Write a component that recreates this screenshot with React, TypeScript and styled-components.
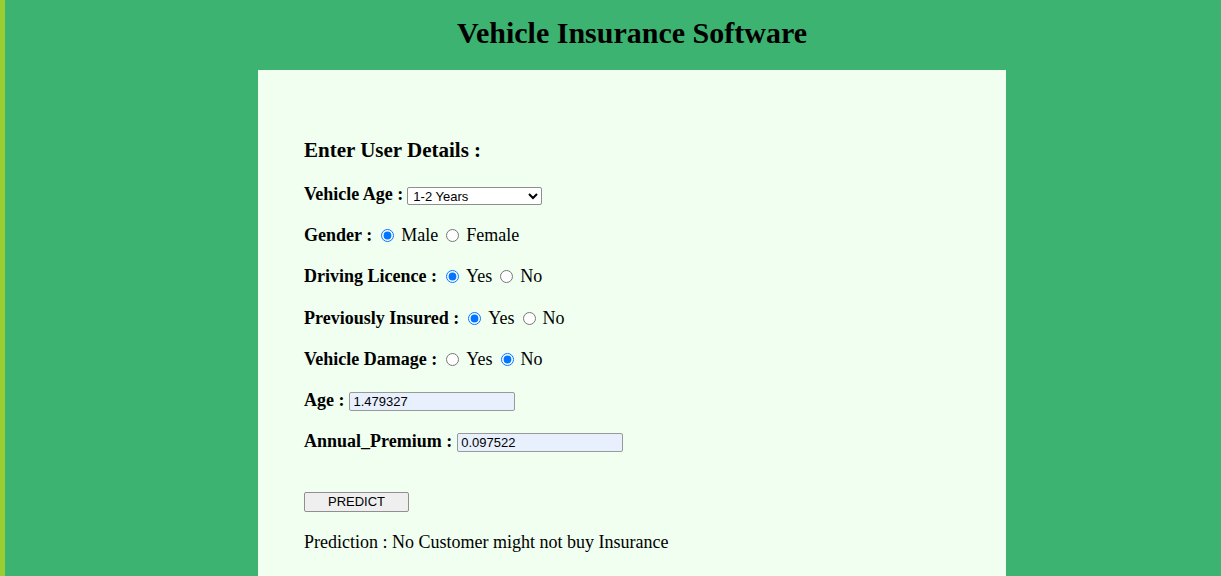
import React, { useState } from "react"
import styled, { createGlobalStyle } from "styled-components"

const GlobalStyle = createGlobalStyle`
  html, body {
    margin: 0;
    padding: 0;
    height: 100%;
  }
  body {
    background-color: #3cb371;
    border-left: 5px solid #9acd32;
    font-family: "Liberation Serif", "Times New Roman", serif;
    color: #000;
    overflow: hidden;
  }
`

const Page = styled.div`
  width: 748px;
  margin-left: 253px;
`

const Title = styled.h1`
  margin: 0;
  height: 70px;
  display: flex;
  align-items: center;
  justify-content: center;
  font-size: 30px;
  font-weight: bold;
  padding-bottom: 4px;
  box-sizing: border-box;
`

const Panel = styled.form`
  background-color: #f0fff0;
  min-height: 520px;
  padding: 66px 46px 20px;
  box-sizing: border-box;
`

const Heading = styled.h3`
  margin: 0 0 10px;
  font-size: 21px;
  font-weight: bold;
  line-height: 28px;
`

const Row = styled.div<{ $gap?: number }>`
  display: flex;
  align-items: center;
  height: 41.2px;
  font-size: 18px;
  margin-top: ${p => p.$gap ?? 0}px;
`

const Label = styled.label`
  font-weight: bold;
  margin-right: 4px;
`

const Select = styled.select`
  width: 135px;
  height: 18px;
  margin-top: 2px;
  font-family: Arial, "Liberation Sans", sans-serif;
  font-size: 13px;
  padding: 0 0 0 1px;
  border: 1px solid #8f8f8f;
  border-radius: 2px;
  background: #fff;
  color: #000;
`

const Radio = styled.input.attrs({ type: "radio" })`
  margin: 0 7px 0 5px;
  width: 13px;
  height: 13px;
`

const Option = styled.span`
  margin-right: 3px;
`

const TextInput = styled.input`
  width: 166px;
  height: 19px;
  margin-top: 2px;
  margin-left: 1px;
  box-sizing: border-box;
  font-family: Arial, "Liberation Sans", sans-serif;
  font-size: 13px;
  padding: 1px 3px;
  border: 1px solid #999;
  border-radius: 2px;
  background-color: #e8f0fe;
  color: #000;
`

const Button = styled.button`
  width: 105px;
  height: 20px;
  font-family: Arial, "Liberation Sans", sans-serif;
  font-size: 13px;
  padding: 0;
  border: 1px solid #8f8f8f;
  border-radius: 2px;
  background-color: #efefef;
  color: #000;
`

const Result = styled.p`
  margin: 0;
  font-size: 18px;
  height: 39px;
  display: flex;
  align-items: center;
`

type RadioGroupProps = {
  name: string
  options: string[]
  value: string
  onChange: (v: string) => void
}

const RadioGroup = ({ name, options, value, onChange }: RadioGroupProps) => (
  <>
    {options.map(opt => (
      <React.Fragment key={opt}>
        <Radio name={name} checked={value === opt} onChange={() => onChange(opt)} />
        <Option>{opt}</Option>
      </React.Fragment>
    ))}
  </>
)

export default function App() {
  const [gender, setGender] = useState("Male")
  const [licence, setLicence] = useState("Yes")
  const [insured, setInsured] = useState("Yes")
  const [damage, setDamage] = useState("No")

  return (
    <>
      <GlobalStyle />
      <Page>
        <Title>Vehicle Insurance Software</Title>
        <Panel onSubmit={e => e.preventDefault()}>
          <Heading>Enter User Details :</Heading>
          <Row>
            <Label>Vehicle Age :</Label>
            <Select defaultValue="1-2">
              <option value="lt1">&lt; 1 Year</option>
              <option value="1-2">1-2 Years</option>
              <option value="gt2">&gt; 2 Years</option>
            </Select>
          </Row>
          <Row>
            <Label>Gender :</Label>
            <RadioGroup name="gender" options={["Male", "Female"]} value={gender} onChange={setGender} />
          </Row>
          <Row>
            <Label>Driving Licence :</Label>
            <RadioGroup name="licence" options={["Yes", "No"]} value={licence} onChange={setLicence} />
          </Row>
          <Row>
            <Label>Previously Insured :</Label>
            <RadioGroup name="insured" options={["Yes", "No"]} value={insured} onChange={setInsured} />
          </Row>
          <Row>
            <Label>Vehicle Damage :</Label>
            <RadioGroup name="damage" options={["Yes", "No"]} value={damage} onChange={setDamage} />
          </Row>
          <Row>
            <Label>Age :</Label>
            <TextInput defaultValue="1.479327" />
          </Row>
          <Row>
            <Label>Annual_Premium :</Label>
            <TextInput defaultValue="0.097522" />
          </Row>
          <Row $gap={19}>
            <Button type="submit">PREDICT</Button>
          </Row>
          <Result>Prediction : No Customer might not buy Insurance</Result>
        </Panel>
      </Page>
    </>
  )
}
